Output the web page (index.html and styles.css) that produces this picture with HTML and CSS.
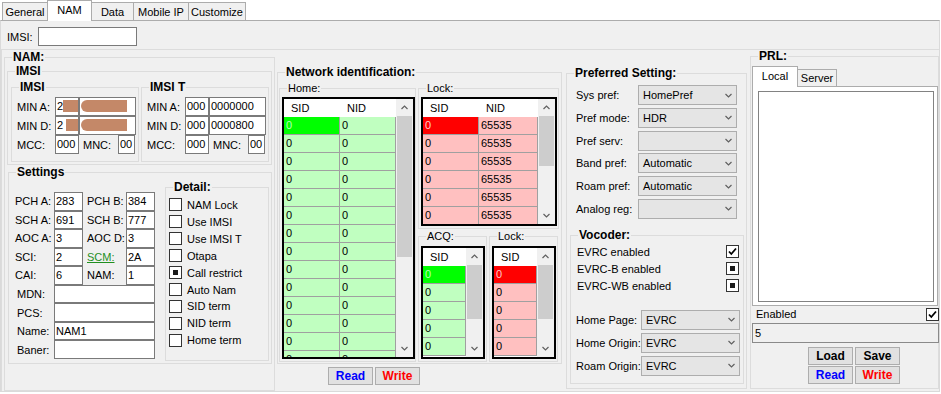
FILE: index.html
```html
<!DOCTYPE html>
<html lang="en">
<head>
  <meta charset="UTF-8">
  <title>NAM</title>
  <link rel="stylesheet" href="styles.css">
</head>
<body>
  <div class="tab-strip">
    <div class="tab w-general">General</div>
    <div class="tab active w-nam">NAM</div>
    <div class="tab w-data">Data</div>
    <div class="tab w-mip">Mobile IP</div>
    <div class="tab w-cust">Customize</div>
  </div>

  <div class="tab-page">
    <div class="imsi-bar">
      <span class="imsi-lbl">IMSI:</span>
      <span class="tb imsi-input"></span>
    </div>

    <div class="panel">
      <!-- NAM -->
      <fieldset class="grp nam">
        <legend>NAM:</legend>
        <fieldset class="grp imsi-outer">
          <legend>IMSI</legend>
          <div class="imsi-pair">
            <fieldset class="grp imsi-box">
              <legend>IMSI</legend>
              <div class="rows">
                <div class="min-row"><span class="lbl-min">MIN A:</span><span class="tb w24">2<i class="redact r-a"></i></span><span class="tb w57"><i class="redact r-long"></i></span></div>
                <div class="min-row"><span class="lbl-min">MIN D:</span><span class="tb w24">2<i class="redact r-d"></i></span><span class="tb w57"><i class="redact r-long"></i></span></div>
                <div class="min-row"><span class="lbl-min">MCC:</span><span class="tb w24">000</span><span class="lbl-mnc">MNC:</span><span class="tb w17">00</span></div>
              </div>
            </fieldset>
            <fieldset class="grp imsi-box">
              <legend>IMSI T</legend>
              <div class="rows">
                <div class="min-row"><span class="lbl-min">MIN A:</span><span class="tb w24">000</span><span class="tb w57">0000000</span></div>
                <div class="min-row"><span class="lbl-min">MIN D:</span><span class="tb w24">000</span><span class="tb w57">0000800</span></div>
                <div class="min-row"><span class="lbl-min">MCC:</span><span class="tb w24">000</span><span class="lbl-mnc">MNC:</span><span class="tb w17">00</span></div>
              </div>
            </fieldset>
          </div>
        </fieldset>

        <fieldset class="grp settings">
          <legend>Settings</legend>
          <div class="settings-body">
            <div class="fields">
              <span class="fl">PCH A:</span><span class="tb">283</span><span class="fl col3">PCH B:</span><span class="tb">384</span>
              <span class="fl">SCH A:</span><span class="tb">691</span><span class="fl col3">SCH B:</span><span class="tb">777</span>
              <span class="fl">AOC A:</span><span class="tb">3</span><span class="fl col3">AOC D:</span><span class="tb">3</span>
              <span class="fl">SCI:</span><span class="tb">2</span><span class="fl col3 link">SCM:</span><span class="tb">2A</span>
              <span class="fl">CAI:</span><span class="tb">6</span><span class="fl col3">NAM:</span><span class="tb">1</span>
              <span class="fl wide">MDN:</span><span class="tb span3"></span>
              <span class="fl wide">PCS:</span><span class="tb span3"></span>
              <span class="fl wide">Name:</span><span class="tb span3">NAM1</span>
              <span class="fl wide">Baner:</span><span class="tb span3"></span>
            </div>
            <fieldset class="grp detail">
              <legend>Detail:</legend>
              <div class="checks">
                <div class="chk-row"><span class="cb"></span>NAM Lock</div>
                <div class="chk-row"><span class="cb"></span>Use IMSI</div>
                <div class="chk-row"><span class="cb"></span>Use IMSI T</div>
                <div class="chk-row"><span class="cb"></span>Otapa</div>
                <div class="chk-row"><span class="cb mixed"></span>Call restrict</div>
                <div class="chk-row"><span class="cb"></span>Auto Nam</div>
                <div class="chk-row"><span class="cb"></span>SID term</div>
                <div class="chk-row"><span class="cb"></span>NID term</div>
                <div class="chk-row"><span class="cb"></span>Home term</div>
              </div>
            </fieldset>
          </div>
        </fieldset>
      </fieldset>

      <!-- Network identification -->
      <div class="netid-col">
        <fieldset class="grp netid">
          <legend>Network identification:</legend>
          <div class="netid-body">
            <fieldset class="grp sub home">
              <legend>Home:</legend>
              <div class="lv home-lv green">
                <div class="lv-grid">
                  <div class="lv-head"><span class="c56">SID</span><span class="c56">NID</span></div>
                  <div class="lv-row"><span class="c56 sel">0</span><span class="c56">0</span></div>
                  <div class="lv-row"><span class="c56">0</span><span class="c56">0</span></div>
                  <div class="lv-row"><span class="c56">0</span><span class="c56">0</span></div>
                  <div class="lv-row"><span class="c56">0</span><span class="c56">0</span></div>
                  <div class="lv-row"><span class="c56">0</span><span class="c56">0</span></div>
                  <div class="lv-row"><span class="c56">0</span><span class="c56">0</span></div>
                  <div class="lv-row"><span class="c56">0</span><span class="c56">0</span></div>
                  <div class="lv-row"><span class="c56">0</span><span class="c56">0</span></div>
                  <div class="lv-row"><span class="c56">0</span><span class="c56">0</span></div>
                  <div class="lv-row"><span class="c56">0</span><span class="c56">0</span></div>
                  <div class="lv-row"><span class="c56">0</span><span class="c56">0</span></div>
                  <div class="lv-row"><span class="c56">0</span><span class="c56">0</span></div>
                  <div class="lv-row"><span class="c56">0</span><span class="c56">0</span></div>
                  <div class="lv-row"><span class="c56">0</span><span class="c56">0</span></div>
                </div>
                <div class="sb">
                  <div class="sb-btn"><svg class="chev" width="7" height="5" viewBox="0 0 7 5"><path d="M.5 4 3.5 1 6.5 4"/></svg></div>
                  <div class="sb-thumb t-home"></div>
                  <div class="sb-fill"></div>
                  <div class="sb-btn"><svg class="chev" width="7" height="5" viewBox="0 0 7 5"><path d="M.5 1 3.5 4 6.5 1"/></svg></div>
                </div>
              </div>
            </fieldset>

            <div class="netid-right">
              <fieldset class="grp sub lock">
                <legend>Lock:</legend>
                <div class="lv lock-lv red">
                  <div class="lv-grid">
                    <div class="lv-head"><span class="c56">SID</span><span class="c59">NID</span></div>
                    <div class="lv-row"><span class="c56 sel">0</span><span class="c59">65535</span></div>
                    <div class="lv-row"><span class="c56">0</span><span class="c59">65535</span></div>
                    <div class="lv-row"><span class="c56">0</span><span class="c59">65535</span></div>
                    <div class="lv-row"><span class="c56">0</span><span class="c59">65535</span></div>
                    <div class="lv-row"><span class="c56">0</span><span class="c59">65535</span></div>
                    <div class="lv-row"><span class="c56">0</span><span class="c59">65535</span></div>
                  </div>
                  <div class="sb">
                    <div class="sb-btn"><svg class="chev" width="7" height="5" viewBox="0 0 7 5"><path d="M.5 4 3.5 1 6.5 4"/></svg></div>
                    <div class="sb-thumb t-lock"></div>
                    <div class="sb-fill"></div>
                    <div class="sb-btn"><svg class="chev" width="7" height="5" viewBox="0 0 7 5"><path d="M.5 1 3.5 4 6.5 1"/></svg></div>
                  </div>
                </div>
              </fieldset>

              <div class="acq-pair">
                <fieldset class="grp sub acq">
                  <legend>ACQ:</legend>
                  <div class="lv small-lv green">
                    <div class="lv-grid">
                      <div class="lv-head"><span class="c43">SID</span></div>
                      <div class="lv-row"><span class="c43 sel">0</span></div>
                      <div class="lv-row"><span class="c43">0</span></div>
                      <div class="lv-row"><span class="c43">0</span></div>
                      <div class="lv-row"><span class="c43">0</span></div>
                      <div class="lv-row"><span class="c43">0</span></div>
                    </div>
                    <div class="sb">
                      <div class="sb-btn"><svg class="chev" width="7" height="5" viewBox="0 0 7 5"><path d="M.5 4 3.5 1 6.5 4"/></svg></div>
                      <div class="sb-thumb t-small"></div>
                      <div class="sb-fill"></div>
                      <div class="sb-btn"><svg class="chev" width="7" height="5" viewBox="0 0 7 5"><path d="M.5 1 3.5 4 6.5 1"/></svg></div>
                    </div>
                  </div>
                </fieldset>
                <fieldset class="grp sub acq">
                  <legend>Lock:</legend>
                  <div class="lv small-lv red">
                    <div class="lv-grid">
                      <div class="lv-head"><span class="c43">SID</span></div>
                      <div class="lv-row"><span class="c43 sel">0</span></div>
                      <div class="lv-row"><span class="c43">0</span></div>
                      <div class="lv-row"><span class="c43">0</span></div>
                      <div class="lv-row"><span class="c43">0</span></div>
                      <div class="lv-row"><span class="c43">0</span></div>
                    </div>
                    <div class="sb">
                      <div class="sb-btn"><svg class="chev" width="7" height="5" viewBox="0 0 7 5"><path d="M.5 4 3.5 1 6.5 4"/></svg></div>
                      <div class="sb-thumb t-small"></div>
                      <div class="sb-fill"></div>
                      <div class="sb-btn"><svg class="chev" width="7" height="5" viewBox="0 0 7 5"><path d="M.5 1 3.5 4 6.5 1"/></svg></div>
                    </div>
                  </div>
                </fieldset>
              </div>
            </div>
          </div>
        </fieldset>
        <div class="rw">
          <button class="btn read">Read</button>
          <button class="btn write">Write</button>
        </div>
      </div>

      <!-- Preferred Setting -->
      <fieldset class="grp pref">
        <legend>Preferred Setting:</legend>
        <div class="pref-rows">
          <div class="prow"><span class="plbl">Sys pref:</span><span class="combo"><span>HomePref</span><svg class="chev" width="7" height="5" viewBox="0 0 7 5"><path d="M.5 1 3.5 4 6.5 1"/></svg></span></div>
          <div class="prow"><span class="plbl">Pref mode:</span><span class="combo"><span>HDR</span><svg class="chev" width="7" height="5" viewBox="0 0 7 5"><path d="M.5 1 3.5 4 6.5 1"/></svg></span></div>
          <div class="prow"><span class="plbl">Pref serv:</span><span class="combo"><span></span><svg class="chev" width="7" height="5" viewBox="0 0 7 5"><path d="M.5 1 3.5 4 6.5 1"/></svg></span></div>
          <div class="prow"><span class="plbl">Band pref:</span><span class="combo"><span>Automatic</span><svg class="chev" width="7" height="5" viewBox="0 0 7 5"><path d="M.5 1 3.5 4 6.5 1"/></svg></span></div>
          <div class="prow"><span class="plbl">Roam pref:</span><span class="combo"><span>Automatic</span><svg class="chev" width="7" height="5" viewBox="0 0 7 5"><path d="M.5 1 3.5 4 6.5 1"/></svg></span></div>
          <div class="prow"><span class="plbl">Analog reg:</span><span class="combo"><span></span><svg class="chev" width="7" height="5" viewBox="0 0 7 5"><path d="M.5 1 3.5 4 6.5 1"/></svg></span></div>
        </div>
        <fieldset class="grp vocoder">
          <legend>Vocoder:</legend>
          <div class="voc-checks">
            <div class="vrow">EVRC enabled<span class="cb"><svg width="11" height="11" viewBox="0 0 11 11"><path d="M2 5.5 4.3 8 9 2.5" fill="none" stroke="#000" stroke-width="1.8"/></svg></span></div>
            <div class="vrow">EVRC-B enabled<span class="cb mixed"></span></div>
            <div class="vrow">EVRC-WB enabled<span class="cb mixed"></span></div>
          </div>
          <div class="voc-combos">
            <div class="prow"><span class="vlbl">Home Page:</span><span class="combo"><span>EVRC</span><svg class="chev" width="7" height="5" viewBox="0 0 7 5"><path d="M.5 1 3.5 4 6.5 1"/></svg></span></div>
            <div class="prow"><span class="vlbl">Home Origin:</span><span class="combo"><span>EVRC</span><svg class="chev" width="7" height="5" viewBox="0 0 7 5"><path d="M.5 1 3.5 4 6.5 1"/></svg></span></div>
            <div class="prow"><span class="vlbl">Roam Origin:</span><span class="combo"><span>EVRC</span><svg class="chev" width="7" height="5" viewBox="0 0 7 5"><path d="M.5 1 3.5 4 6.5 1"/></svg></span></div>
          </div>
        </fieldset>
      </fieldset>

      <!-- PRL -->
      <fieldset class="grp prl">
        <legend>PRL:</legend>
        <div class="prl-tabs">
          <div class="ptab active">Local</div>
          <div class="ptab server">Server</div>
        </div>
        <div class="prl-page">
          <div class="prl-list"></div>
        </div>
        <div class="enabled-row">Enabled<span class="cb"><svg width="11" height="11" viewBox="0 0 11 11"><path d="M2 5.5 4.3 8 9 2.5" fill="none" stroke="#000" stroke-width="1.8"/></svg></span></div>
        <div class="prl-value">5</div>
        <div class="prl-btns">
          <button class="btn">Load</button>
          <button class="btn">Save</button>
          <button class="btn read">Read</button>
          <button class="btn write">Write</button>
        </div>
      </fieldset>
    </div>
  </div>
</body>
</html>
```

FILE: styles.css
```css
/* WinForms-like NAM settings page */
* {
  box-sizing: border-box;
}

body {
  margin: 0;
  width: 941px;
  height: 394px;
  overflow: hidden;
  background-color: #fff;
  color: #000;
  font-family: 'Liberation Sans', Arial, sans-serif;
  font-size: 11px;
}

/* Group boxes (kept first so the per-group margins below win) */
.grp {
  margin: 0;
  padding: 0;
  min-width: 0;
  border: 1px solid #dcdcdc;
}

.grp > legend {
  margin-left: 7px;
  padding: 0 1px;
  font-size: 12px;
  font-weight: bold;
  line-height: 13px;
}

.grp.sub > legend {
  font-size: 11px;
  font-weight: normal;
}

/* Top tabs */
.tab-strip {
  display: flex;
  align-items: flex-end;
  height: 20px;
  padding-left: 2px;
  position: relative;
  z-index: 1;
}

.tab {
  height: 18px;
  margin-right: -1px;
  border: 1px solid #acacac;
  border-bottom: none;
  background-color: #f0f0f0;
  display: flex;
  align-items: center;
  justify-content: center;
}

.tab.active {
  height: 21px;
  margin-bottom: -1px;
  padding-bottom: 2px;
  background-color: #fff;
  position: relative;
  z-index: 1;
}

.w-general { width: 46px; }
.w-nam { width: 45px; }
.w-data { width: 43px; }
.w-mip { width: 56px; }
.w-cust { width: 58px; }

.tab-page {
  width: 940px;
  height: 372px;
  border: 1px solid #dadada;
  border-top-color: #acacac;
  background-color: #f0f0f0;
}

.imsi-bar {
  display: flex;
  align-items: flex-start;
  height: 28px;
  padding: 6px 0 0 6px;
}

.imsi-lbl {
  width: 31px;
  line-height: 21px;
}

.imsi-input {
  width: 99px;
  height: 21px;
}

.panel {
  display: flex;
  align-items: flex-start;
  height: 342px;
  border-top: 1px solid #dcdcdc;
  border-left: 1px solid #dcdcdc;
}

/* Text boxes */
.tb {
  display: block;
  height: 19px;
  padding: 0 1px;
  border: 1px solid #7a7a7a;
  background-color: #fff;
  line-height: 17px;
  white-space: nowrap;
  overflow: hidden;
}

.w24 { width: 24px; }
.w57 { width: 57px; }
.w17 { width: 17px; }

.redact {
  display: inline-block;
  height: 12px;
  vertical-align: -2px;
  background-color: #c48868;
}

.r-a { width: 15px; }
.r-d { width: 12px; margin-left: 3px; }
.r-long { width: 46px; border-radius: 6px 0 0 6px; }

/* NAM column */
.nam {
  width: 271px;
  height: 340px;
  margin: 1px 0 0 2px;
}

.imsi-outer {
  width: 265px;
  height: 100px;
  margin: 1px 0 0 2px;
}

.imsi-pair {
  display: flex;
  gap: 2px;
  margin: 3px 0 0 3px;
}

.imsi-box {
  width: 128px;
  height: 81px;
}

.imsi-box .rows {
  margin: 3px 0 0 5px;
}

.min-row {
  display: flex;
  align-items: center;
  height: 19px;
}

.lbl-min { width: 38px; }

.lbl-mnc {
  width: 39px;
  padding-left: 4px;
}

.settings {
  width: 264px;
  height: 198px;
  margin: 1px 0 0 3px;
}

.settings-body {
  display: flex;
  align-items: flex-start;
}

.fields {
  display: grid;
  grid-template-columns: 39px 29px 43px 29px;
  grid-auto-rows: 18.56px;
  width: 140px;
  margin: 13px 0 0 6px;
}

.fields .tb {
  height: auto;
}

.fl {
  display: flex;
  align-items: center;
}

.fl.col3 { padding-left: 4px; }
.fl.wide { padding-left: 2px; }

.fl.link {
  color: #1f8f1f;
  text-decoration: underline;
}

.span3 { grid-column: span 3; }

.detail {
  width: 104px;
  height: 180px;
  margin: 2px 0 0 10px;
}

.checks {
  margin: 2.5px 0 0 3px;
}

.chk-row {
  display: flex;
  align-items: center;
  height: 16.93px;
}

.cb {
  flex: none;
  width: 13px;
  height: 13px;
  border: 1px solid #333;
  background-color: #fff;
  display: flex;
  align-items: center;
  justify-content: center;
}

.chk-row .cb { margin-right: 5px; }

.cb.mixed::after {
  content: "";
  width: 5px;
  height: 5px;
  background-color: #1a1a1a;
}

/* Network identification */
.netid-col {
  width: 285px;
  margin: 16px 0 0 2px;
}

.netid {
  width: 285px;
  height: 298px;
}

.netid-body {
  display: flex;
  align-items: flex-start;
}

.home {
  width: 137px;
  height: 280px;
  margin: 3px 0 0 1px;
}

.netid-right {
  width: 141px;
  margin-left: 2px;
}

.lock {
  width: 141px;
  height: 147px;
  margin-top: 3px;
}

.acq-pair {
  display: flex;
  gap: 2px;
  margin-top: 1px;
}

.acq {
  width: 69px;
  height: 132px;
}

/* List views */
.lv {
  display: flex;
  border: 2px solid #000;
  background-color: #fff;
  overflow: hidden;
}

.home-lv {
  width: 133px;
  height: 262px;
  margin: 2px 0 0 2px;
}

.lock-lv {
  width: 136px;
  height: 129px;
  margin: 2px 0 0 2px;
}

.small-lv {
  width: 64px;
  height: 113px;
  margin: 3px 0 0 2px;
}

.lv-grid {
  flex: 1;
  min-width: 0;
}

.lv-head {
  display: flex;
  height: 18px;
}

.lv-head span {
  padding-left: 7px;
  line-height: 18px;
}

.lv-row {
  display: flex;
  height: 18px;
}

.lv-row span {
  border-right: 1px solid #a0a0a0;
  border-bottom: 1px solid #a0a0a0;
  padding-left: 2px;
  line-height: 17px;
}

.c56 { width: 56px; flex: none; }
.c59 { width: 59px; flex: none; }
.c43 { width: 43px; flex: none; }

.green .lv-row span { background-color: #c0ffc0; }
.green .lv-row span.sel { background-color: #00ff00; color: #b8ffb8; }
.red .lv-row span { background-color: #ffc0c0; }
.red .lv-row span.sel { background-color: #ff0000; color: #ffc8c8; }

.sb {
  flex: none;
  width: 17px;
  display: flex;
  flex-direction: column;
  background-color: #f0f0f0;
}

.sb-btn {
  flex: none;
  height: 17px;
  display: flex;
  align-items: center;
  justify-content: center;
}

.sb-thumb {
  flex: none;
  margin: 0 1px;
  background-color: #cdcdcd;
}

.t-home { height: 141px; }
.t-lock { height: 50px; }
.t-small { height: 54px; }

.sb-fill { flex: 1; }

.chev {
  display: block;
}

.chev path {
  fill: none;
  stroke: #606060;
  stroke-width: 1.2;
}

/* Buttons */
.rw {
  display: flex;
  gap: 2px;
  margin: 3px 0 0 51px;
}

.btn {
  width: 45px;
  height: 18px;
  padding: 0;
  border: 1px solid #adadad;
  background-color: #e1e1e1;
  color: #000;
  font-family: 'Liberation Sans', Arial, sans-serif;
  font-size: 12px;
  font-weight: bold;
  line-height: 16px;
}

.btn.read { color: #0000ff; }
.btn.write { color: #ff0000; }

/* Preferred setting */
.pref {
  width: 181px;
  height: 322px;
  margin: 17px 0 0 4px;
}

.pref-rows {
  display: flex;
  flex-direction: column;
  gap: 2.8px;
  margin: 5px 0 0 9px;
}

.prow {
  display: flex;
  align-items: center;
}

.plbl { width: 62px; }
.vlbl { width: 65px; }

.combo {
  display: flex;
  align-items: center;
  justify-content: space-between;
  width: 99px;
  height: 20px;
  padding: 0 4px;
  border: 1px solid #adadad;
  background-color: #e5e5e5;
}

.vocoder {
  width: 174px;
  height: 155px;
  margin: 10px 0 0 3px;
}

.voc-checks {
  margin: 1.5px 4px 0 6px;
}

.vrow {
  display: flex;
  align-items: center;
  justify-content: space-between;
  height: 17px;
}

.voc-combos {
  display: flex;
  flex-direction: column;
  gap: 3px;
  margin: 15.5px 0 0 5px;
}

/* PRL */
.prl {
  width: 189px;
  height: 339px;
  margin-left: 3px;
}

.prl-tabs {
  display: flex;
  align-items: flex-end;
  height: 23px;
  margin-left: 1px;
  position: relative;
  z-index: 1;
}

.ptab {
  border: 1px solid #acacac;
  border-bottom: none;
  background-color: #f0f0f0;
  display: flex;
  align-items: center;
  justify-content: center;
}

.ptab.active {
  width: 46px;
  height: 21px;
  margin-bottom: -1px;
  padding-bottom: 2px;
  background-color: #fff;
}

.ptab.server {
  width: 40px;
  height: 17px;
  margin-left: -1px;
}

.prl-page {
  width: 186px;
  height: 220px;
  margin-left: 1px;
  border: 1px solid #acacac;
  background-color: #fff;
}

.prl-list {
  width: 176px;
  height: 211px;
  margin: 4px 0 0 5px;
  border: 1px solid #828282;
  background-color: #fff;
}

.enabled-row {
  display: flex;
  align-items: center;
  justify-content: space-between;
  height: 16px;
  margin-right: -1px;
  padding-left: 5px;
}

.prl-value {
  height: 20px;
  margin: 1px -1px 0 1px;
  padding-left: 2px;
  border: 1px solid #8a8a8a;
  background-color: #f0f0f0;
  line-height: 18px;
}

.prl-btns {
  display: grid;
  grid-template-columns: 45px 45px;
  column-gap: 2px;
  row-gap: 1px;
  margin: 4px 0 0 57px;
}
```
